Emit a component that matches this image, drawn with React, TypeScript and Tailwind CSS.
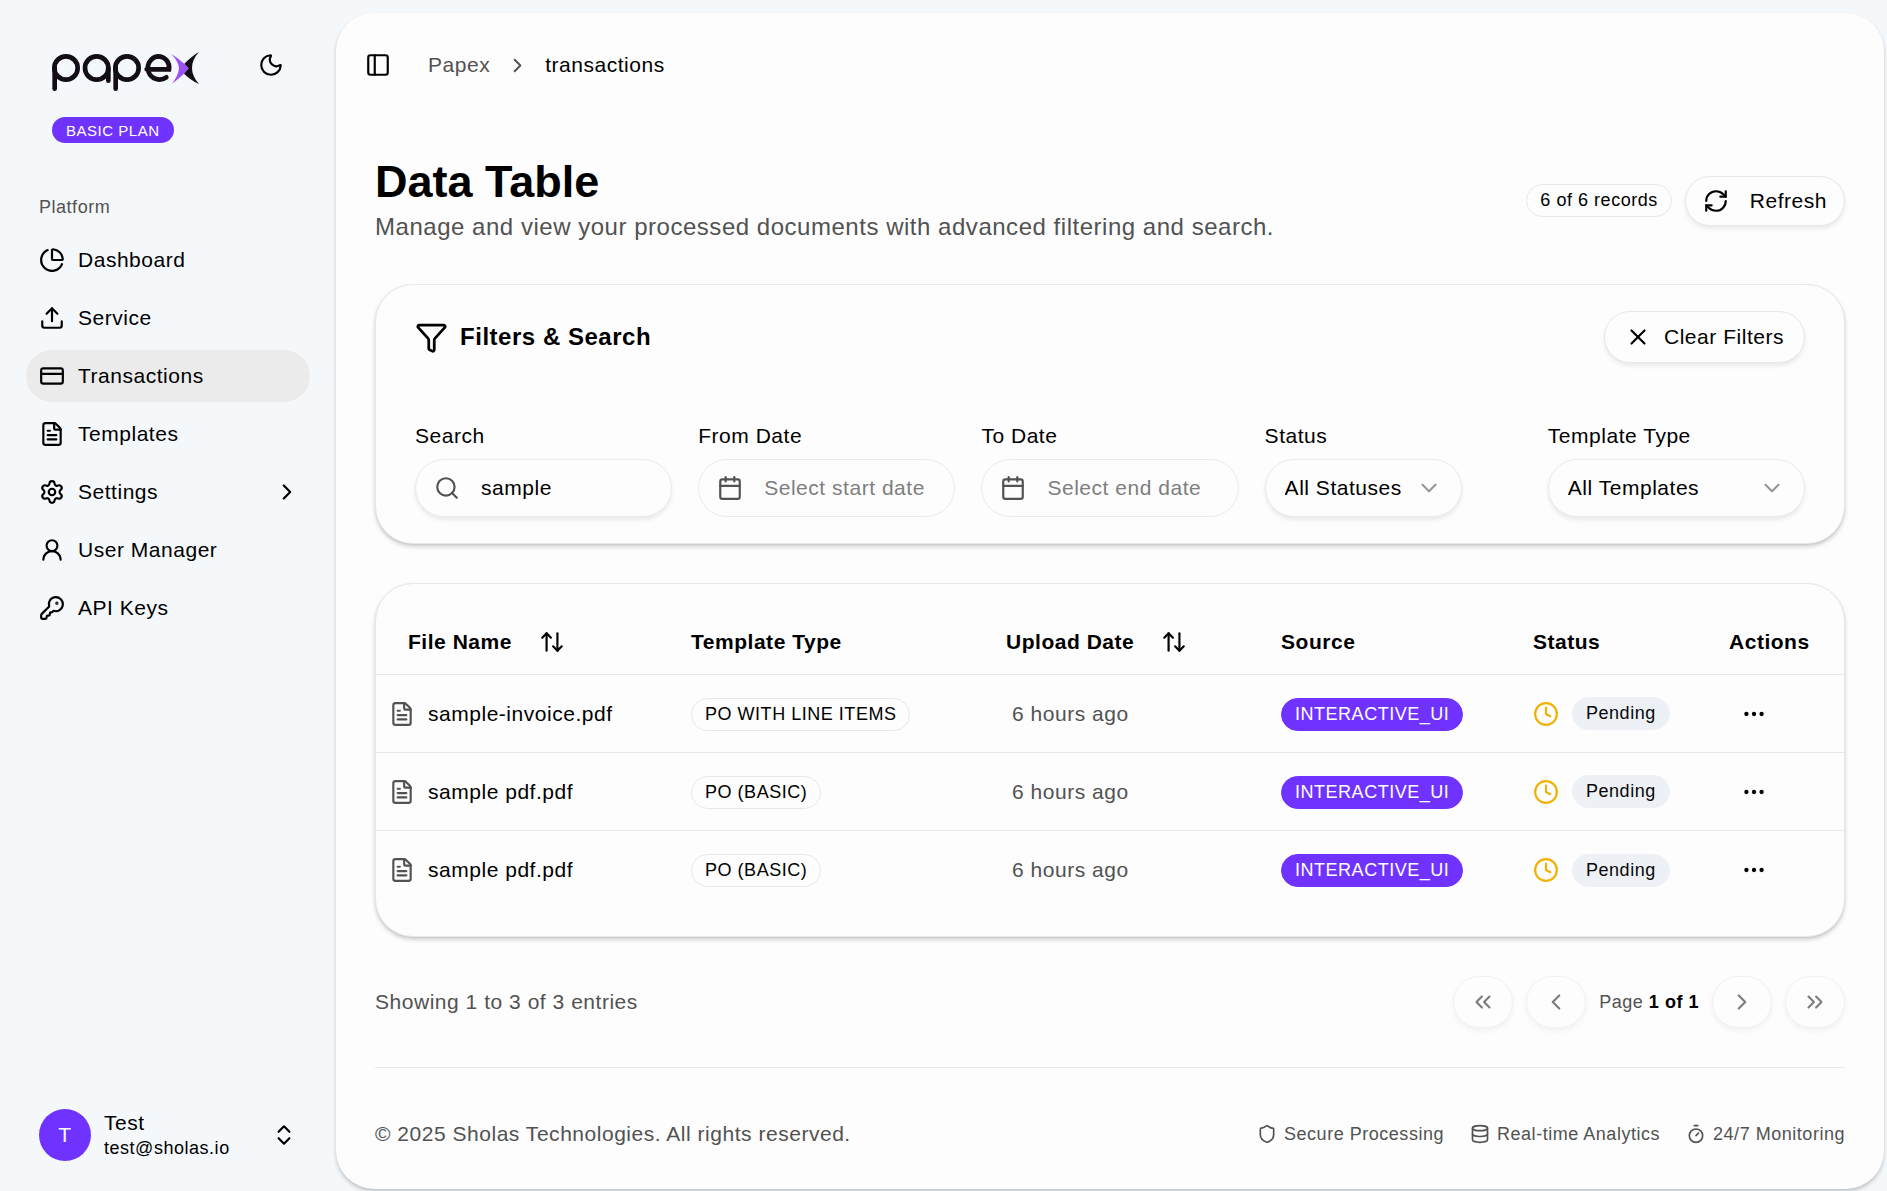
import React, { useState } from "react";
import {
  ArrowUpDown,
  Calendar,
  ChartPie,
  ChevronDown,
  ChevronLeft,
  ChevronRight,
  ChevronsLeft,
  ChevronsRight,
  ChevronsUpDown,
  Clock,
  CreditCard,
  Database,
  Ellipsis,
  FileText,
  Funnel,
  KeyRound,
  Moon,
  PanelLeft,
  RefreshCw,
  Search,
  Settings,
  Shield,
  Timer,
  Upload,
  UserRound,
  X,
} from "lucide-react";

const navItems = [
  { label: "Dashboard", icon: ChartPie },
  { label: "Service", icon: Upload },
  { label: "Transactions", icon: CreditCard, active: true },
  { label: "Templates", icon: FileText },
  { label: "Settings", icon: Settings, expandable: true },
  { label: "User Manager", icon: UserRound },
  { label: "API Keys", icon: KeyRound },
];

const rows = [
  { id: 1, file: "sample-invoice.pdf", template: "PO WITH LINE ITEMS" },
  { id: 2, file: "sample pdf.pdf", template: "PO (BASIC)" },
  { id: 3, file: "sample pdf.pdf", template: "PO (BASIC)" },
];

const icon = "size-[26px] shrink-0";
const outlineButton =
  "flex items-center rounded-full border border-[#e7e7ee] bg-[#fdfdfd] shadow-[0_3px_4px_rgba(0,0,0,0.08)]";
const field =
  "h-[58px] w-full rounded-full border border-[#ebebeb] bg-[#fdfdfd] text-[21px] tracking-wide outline-none";
const card =
  "rounded-[38px] border border-[#e7e7ee] bg-[#fdfdfd] shadow-[0_3px_4px_rgba(0,0,0,0.16),0_1px_3px_-1px_rgba(0,0,0,0.16)]";
const badge =
  "inline-flex h-[33px] items-center whitespace-nowrap rounded-full border px-[13px] text-[18px]";

function Logo() {
  return (
    <svg viewBox="156 156 444 120" className="h-10 w-[148px]" role="img" aria-label="papex">
      <g fill="none" stroke="#120d16" strokeWidth="14" strokeLinecap="round">
        <circle cx="198" cy="204" r="35" />
        <path d="M164 204V266" />
        <circle cx="290" cy="204" r="35" />
        <path d="M325 204V242" />
        <circle cx="381" cy="204" r="35" />
        <path d="M347 204V266" />
        <path d="M440 208H507C510 188 496 169 473 169A35 35 0 1 0 499 232" />
      </g>
      <path d="M513 162C535 175 553 190 566 205C553 222 536 237 516 251C528 236 536 220 537 205C536 190 527 175 513 162Z" fill="#9b51f5" />
      <path d="M597 156C583 164 565 178 553 191L566 205L552 221C565 234 580 244 597 252C583 236 576 221 576 204C576 187 583 171 597 156Z" fill="#120d16" />
    </svg>
  );
}

function Sidebar() {
  return (
    <aside className="sticky top-0 flex h-screen w-[336px] shrink-0 flex-col px-[26px]">
      <div className="flex items-start justify-between px-[26px] pt-[52px]">
        <Logo />
        <button type="button" aria-label="Toggle theme">
          <Moon className={icon} />
        </button>
      </div>
      <div className="pt-[25px] pl-[26px]">
        <span className="flex h-[26px] w-fit items-center rounded-full bg-[#7033ff] px-[14px] text-[15px] leading-none text-white">
          BASIC PLAN
        </span>
      </div>
      <nav className="mt-[50px]">
        <h2 className="px-[13px] text-[18px] leading-[28px] text-[#525252]">Platform</h2>
        <ul className="mt-[13px] flex flex-col gap-[6px]">
          {navItems.map(({ label, icon: Icon, active, expandable }) => (
            <li key={label}>
              <a
                href="#"
                aria-current={active ? "page" : undefined}
                className={
                  active
                    ? "flex h-[52px] items-center gap-[13px] rounded-full bg-[#ebebeb] pr-[10px] pl-[13px]"
                    : "flex h-[52px] items-center gap-[13px] rounded-full pr-[10px] pl-[13px]"
                }
              >
                <Icon className={icon} />
                <span className="flex-1">{label}</span>
                {expandable && <ChevronRight className={icon} />}
              </a>
            </li>
          ))}
        </ul>
      </nav>
      <button type="button" className="mt-auto mb-[30px] flex h-[52px] items-center gap-[13px] px-[13px] text-left">
        <span className="flex size-[52px] items-center justify-center rounded-full bg-[#7033ff] text-white">T</span>
        <span className="flex flex-1 flex-col">
          <span className="leading-[26px]">Test</span>
          <span className="text-[18px] leading-[24px]">test@sholas.io</span>
        </span>
        <ChevronsUpDown className={icon} />
      </button>
    </aside>
  );
}

function Field({ label, id, children }: { label: string; id: string; children: React.ReactNode }) {
  return (
    <div>
      <label htmlFor={id} className="block leading-[26px]">
        {label}
      </label>
      <div className="relative mt-[10px]">{children}</div>
    </div>
  );
}

function Filters() {
  const [query, setQuery] = useState("sample");
  return (
    <section className={`${card} px-[39px] py-[26px]`}>
      <div className="flex items-center justify-between">
        <h2 className="flex items-center gap-[12px] text-[24px] font-bold">
          <Funnel className="size-[33px]" />
          Filters &amp; Search
        </h2>
        <button type="button" onClick={() => setQuery("")} className={`${outlineButton} h-[52px] gap-[13px] px-[20px]`}>
          <X className={icon} />
          Clear Filters
        </button>
      </div>
      <div className="mt-[60px] grid grid-cols-5 gap-[26px]">
        <Field label="Search" id="search">
          <input
            id="search"
            value={query}
            onChange={(e) => setQuery(e.target.value)}
            className={`${field} pr-4 pl-[65px] shadow-[0_3px_4px_rgba(0,0,0,0.08)]`}
          />
          <Search className={`${icon} pointer-events-none absolute top-4 left-[19px] text-[#525252]`} />
        </Field>
        <Field label="From Date" id="from">
          <input id="from" placeholder="Select start date" className={`${field} pr-4 pl-[65px] placeholder:text-[#7e7e7e]`} />
          <Calendar className={`${icon} pointer-events-none absolute top-4 left-[19px] text-[#525252]`} />
        </Field>
        <Field label="To Date" id="to">
          <input id="to" placeholder="Select end date" className={`${field} pr-4 pl-[65px] placeholder:text-[#7e7e7e]`} />
          <Calendar className={`${icon} pointer-events-none absolute top-4 left-[19px] text-[#525252]`} />
        </Field>
        <Field label="Status" id="status">
          <div className="relative w-[197px]">
            <select id="status" className={`${field} appearance-none pl-[19px] shadow-[0_3px_4px_rgba(0,0,0,0.08)]`}>
              <option>All Statuses</option>
            </select>
            <ChevronDown className={`${icon} pointer-events-none absolute top-4 right-5 opacity-40`} />
          </div>
        </Field>
        <Field label="Template Type" id="template">
          <select id="template" className={`${field} appearance-none pl-[19px] shadow-[0_3px_4px_rgba(0,0,0,0.08)]`}>
            <option>All Templates</option>
          </select>
          <ChevronDown className={`${icon} pointer-events-none absolute top-4 right-5 opacity-40`} />
        </Field>
      </div>
    </section>
  );
}

function SortHeader({ label }: { label: string }) {
  return (
    <button type="button" className="flex items-center gap-[27px] pl-[19px] font-bold">
      {label}
      <ArrowUpDown className={icon} />
    </button>
  );
}

function DocumentsTable() {
  return (
    <section className={`${card} pt-[26px] pb-[27px]`}>
      <table className="w-full table-fixed border-separate border-spacing-0">
        <colgroup>
          <col className="w-[302px]" />
          <col className="w-[296px]" />
          <col className="w-[294px]" />
          <col className="w-[252px]" />
          <col className="w-[196px]" />
          <col className="w-[128px]" />
        </colgroup>
        <thead>
          <tr className="h-[65px] text-left [&>th]:border-b [&>th]:border-[#e7e7ee] [&>th]:px-[13px] [&>th]:font-bold">
            <th>
              <SortHeader label="File Name" />
            </th>
            <th>Template Type</th>
            <th>
              <SortHeader label="Upload Date" />
            </th>
            <th>Source</th>
            <th>Status</th>
            <th>Actions</th>
          </tr>
        </thead>
        <tbody>
          {rows.map((row) => (
            <tr
              key={row.id}
              className="h-[78px] [&>td]:border-b [&>td]:border-[#e7e7ee] [&>td]:px-[13px] last:[&>td]:border-b-0"
            >
              <td>
                <span className="flex items-center gap-[13px]">
                  <FileText className={`${icon} text-[#525252]`} />
                  {row.file}
                </span>
              </td>
              <td>
                <span className={`${badge} border-[#e7e7ee]`}>{row.template}</span>
              </td>
              <td>
                <span className="pl-[25px] text-[#525252]">6 hours ago</span>
              </td>
              <td>
                <span className={`${badge} border-[#7033ff] bg-[#7033ff] text-white`}>INTERACTIVE_UI</span>
              </td>
              <td>
                <span className="flex items-center gap-[13px]">
                  <Clock className={`${icon} text-[#f0b100]`} />
                  <span className={`${badge} border-[#edf0f4] bg-[#edf0f4] text-[#080808]`}>Pending</span>
                </span>
              </td>
              <td>
                <button type="button" aria-label="Row actions" className="flex items-center px-[12px]">
                  <Ellipsis className={icon} />
                </button>
              </td>
            </tr>
          ))}
        </tbody>
      </table>
    </section>
  );
}

const pageButton = `${outlineButton} h-[52px] w-[60px] justify-center opacity-50`;

function Pagination() {
  return (
    <div className="flex items-center justify-between text-[#525252]">
      <p>Showing 1 to 3 of 3 entries</p>
      <div className="flex items-center gap-[13px] text-[18px]">
        <button type="button" disabled aria-label="First page" className={pageButton}>
          <ChevronsLeft className={`${icon} text-black`} />
        </button>
        <button type="button" disabled aria-label="Previous page" className={pageButton}>
          <ChevronLeft className={`${icon} text-black`} />
        </button>
        <p>
          Page <strong className="font-bold text-black">1 of 1</strong>
        </p>
        <button type="button" disabled aria-label="Next page" className={pageButton}>
          <ChevronRight className={`${icon} text-black`} />
        </button>
        <button type="button" disabled aria-label="Last page" className={pageButton}>
          <ChevronsRight className={`${icon} text-black`} />
        </button>
      </div>
    </div>
  );
}

function Footer() {
  const notes = [
    { label: "Secure Processing", icon: Shield },
    { label: "Real-time Analytics", icon: Database },
    { label: "24/7 Monitoring", icon: Timer },
  ];
  return (
    <footer className="flex items-center justify-between border-t border-[#e7e7ee] pt-[52px] pb-[41px] text-[#525252]">
      <p className="leading-[28px]">© 2025 Sholas Technologies. All rights reserved.</p>
      <ul className="flex items-center gap-[26px] text-[18px]">
        {notes.map(({ label, icon: Icon }) => (
          <li key={label} className="flex items-center gap-[7px]">
            <Icon className="size-5" />
            {label}
          </li>
        ))}
      </ul>
    </footer>
  );
}

export default function App() {
  return (
    <div className="flex min-h-screen bg-[#f5f8fb] font-['Liberation_Sans',Arial,sans-serif] text-[21px] tracking-wide text-black">
      <Sidebar />
      <main className="mt-[13px] mr-[3px] mb-[3px] min-w-0 flex-1 rounded-[38px] bg-[#fdfdfd] shadow-[0_3px_4px_rgba(0,0,0,0.16),0_1px_3px_-1px_rgba(0,0,0,0.16)]">
        <header className="flex h-[104px] items-center px-[29px]">
          <button type="button" aria-label="Toggle sidebar">
            <PanelLeft className={icon} />
          </button>
          <nav aria-label="Breadcrumb" className="ml-[37px] flex items-center gap-[16px]">
            <a href="#" className="text-[#525252]">
              Papex
            </a>
            <ChevronRight className="size-[23px] text-[#525252]" />
            <span aria-current="page">transactions</span>
          </nav>
        </header>
        <div className="flex flex-col gap-[39px] px-[39px] pt-[39px]">
          <div className="flex items-center justify-between">
            <div>
              <h1 className="text-[45px] leading-[52px] font-bold tracking-normal">Data Table</h1>
              <p className="text-[24px] leading-[37px] text-[#525252]">
                Manage and view your processed documents with advanced filtering and search.
              </p>
            </div>
            <div className="flex items-center gap-[13px]">
              <span className={`${badge} border-[#e7e7ee]`}>6 of 6 records</span>
              <button type="button" className={`${outlineButton} h-[50px] gap-[21px] px-[17px]`}>
                <RefreshCw className={icon} />
                Refresh
              </button>
            </div>
          </div>
          <Filters />
          <DocumentsTable />
          <Pagination />
          <Footer />
        </div>
      </main>
    </div>
  );
}
